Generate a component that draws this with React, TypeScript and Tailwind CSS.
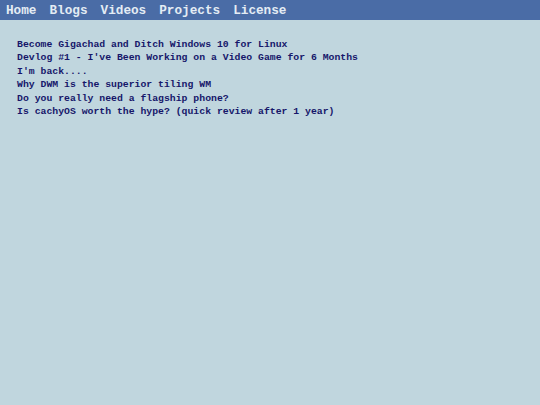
const links = ["Home", "Blogs", "Videos", "Projects", "License"];

const posts = [
  "Become Gigachad and Ditch Windows 10 for Linux",
  "Devlog #1 - I've Been Working on a Video Game for 6 Months",
  "I'm back....",
  "Why DWM is the superior tiling WM",
  "Do you really need a flagship phone?",
  "Is cachyOS worth the hype? (quick review after 1 year)",
];

export default function App() {
  return (
    <div className="min-h-[405px] w-full bg-[#c0d6de] font-['Liberation_Mono',monospace] font-bold">
      <nav className="flex h-5 items-center gap-[13px] bg-[#4a6ca6] px-[6px] pt-[2px] text-[12.7px] text-[#e4ecf4]">
        {links.map((l) => (
          <a key={l} href="#" className="leading-none">
            {l}
          </a>
        ))}
      </nav>
      <ul className="px-[17px] pt-[18px] text-[9.8px] leading-[13.4px] text-[#16166a]">
        {posts.map((p) => (
          <li key={p}>
            <a href="#">{p}</a>
          </li>
        ))}
      </ul>
    </div>
  );
}
